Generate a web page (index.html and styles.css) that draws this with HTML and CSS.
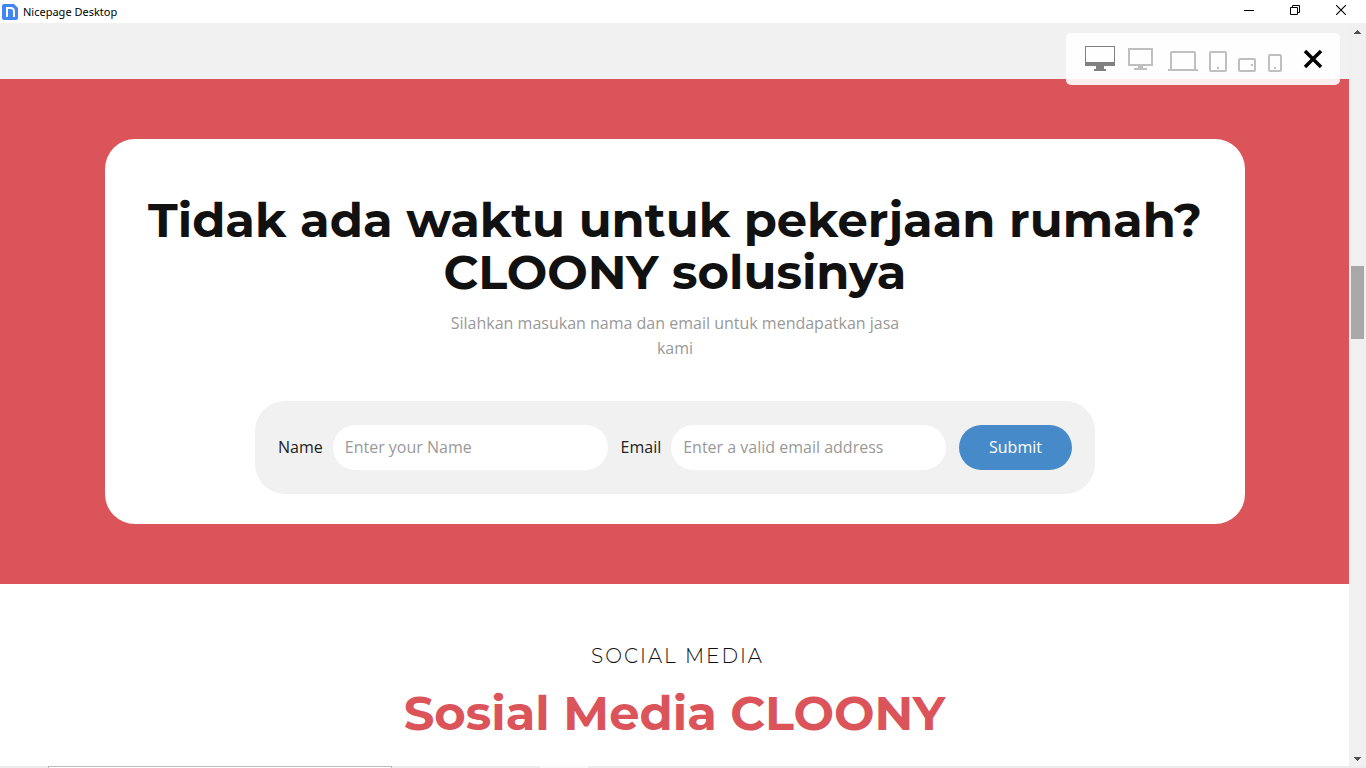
FILE: index.html
```
<!DOCTYPE html>
<html lang="id">
<head>
<meta charset="utf-8">
<title>Nicepage Desktop</title>
<link rel="stylesheet" href="styles.css">
</head>
<body>
<div class="window">
  <header class="titlebar">
    <svg class="app-icon" width="16" height="16" viewBox="0 0 16 16" aria-hidden="true"><path d="M2 0h10l4 4v10a2 2 0 0 1-2 2H2a2 2 0 0 1-2-2V2a2 2 0 0 1 2-2z" fill="#4285f4"/><path d="M5 13V4h3.500q3.500 0 3.500 3.500V13" fill="none" stroke="#fff" stroke-width="2"/></svg>
    <span class="app-name">Nicepage Desktop</span>
    <div class="window-controls">
      <button class="window-button" type="button" aria-label="Minimize"><svg width="10" height="10" viewBox="0 0 10 10"><path d="M0 5.500h10" stroke="#000"/></svg></button>
      <button class="window-button" type="button" aria-label="Restore"><svg width="10" height="10" viewBox="0 0 10 10"><path d="M.5 2.500h7v7h-7zM2.500 2V.5h7v7H8" fill="none" stroke="#000"/></svg></button>
      <button class="window-button" type="button" aria-label="Close"><svg width="10" height="10" viewBox="0 0 10 10"><path d="M0 0l10 10M10 0L0 10" stroke="#000" stroke-width="1.100"/></svg></button>
    </div>
  </header>
  <div class="viewport">
    <main class="page">
      <div class="previous-section"></div>
      <section class="signup">
        <div class="card">
          <h1 class="heading">Tidak ada waktu untuk pekerjaan rumah? CLOONY solusinya</h1>
          <p class="lead">Silahkan masukan nama dan email untuk mendapatkan jasa kami</p>
          <form class="form">
            <label class="label" for="name">Name</label>
            <input class="field" id="name" type="text" placeholder="Enter your Name">
            <label class="label" for="email">Email</label>
            <input class="field" id="email" type="email" placeholder="Enter a valid email address">
            <button class="submit" type="button">Submit</button>
          </form>
        </div>
      </section>
      <section class="social">
        <p class="eyebrow">Social Media</p>
        <h2 class="heading heading-accent">Sosial Media CLOONY</h2>
      </section>
    </main>
    <div class="scrollbar" aria-hidden="true">
      <svg class="arrow" width="7" height="4" viewBox="0 0 7 4" shape-rendering="crispEdges"><path d="M3 0h1v1h1v1h1v1h1v1H0V3h1V2h1V1h1z" fill="#505050"/></svg>
      <div class="track"><div class="thumb"></div></div>
      <svg class="arrow" width="7" height="4" viewBox="0 0 7 4" shape-rendering="crispEdges"><path d="M0 0h7v1H6v1H5v1H4v1H3V3H2V2H1V1H0z" fill="#505050"/></svg>
    </div>
    <div class="devices">
      <svg width="274" height="52" viewBox="0 0 274 52" role="img" aria-label="Preview devices">
        <g fill="#808080"><path d="M19 13h30v20H19zM20 14v15h28V14z" fill-rule="evenodd"/><path d="M30 33h8v3h2v2H28v-2h2z"/></g>
        <g fill="none" stroke="#bfbfbf" stroke-width="2">
          <path d="M63 16h23v16H63z"/><path d="M72 34h5M68 36h13"/>
          <path d="M105 36V20q0-1 1-1h22q1 0 1 1v16M102 37h30"/>
          <rect x="144" y="19" width="16" height="19" rx="1"/><path d="M151 35h2"/>
          <rect x="173" y="26" width="16" height="12" rx="1"/><path d="M185 32h2"/>
          <rect x="203" y="22" width="12" height="16" rx="1"/><path d="M208 35h2"/>
        </g>
        <path d="M239 18l16 16M255 18l-16 16" stroke="#000" stroke-width="3.500"/>
      </svg>
    </div>
  </div>
  <div class="edge"><div class="edge-panel"></div><div class="edge-light"></div></div>
</div>
</body>
</html>
```
FILE: styles.css
```
* { box-sizing: border-box; }

body {
  margin: 0;
  font-family: "Open Sans", sans-serif;
  font-size: 16px;
  color: #111;
  background: #fff;
}

button { border: 0; padding: 0; font: inherit; }

.window {
  display: flex;
  flex-direction: column;
  height: 100vh;
  overflow: hidden;
}

.titlebar {
  display: flex;
  align-items: center;
  flex: none;
  height: 23px;
  padding-left: 2px;
  gap: 5px;
}

.app-name {
  font-family: "Noto Sans", sans-serif;
  font-size: 11px;
  color: #000;
}

.window-controls { display: flex; margin-left: auto; height: 100%; padding: 0 2px 3px 0; }

.window-button {
  display: flex;
  align-items: center;
  justify-content: center;
  width: 46px;
  background: none;
}

.viewport {
  position: relative;
  display: flex;
  flex: 1;
  min-height: 0;
}

.page { flex: 1; min-width: 0; overflow: hidden; }

.previous-section { height: 56px; background: #f1f1f1; }

.signup { padding: 60px 104px 60px 105px; background: #db545a; }

.card {
  padding: 55px 30px 30px;
  border-radius: 30px;
  background: #fff;
  text-align: center;
}

.heading {
  margin: 0;
  font-family: Montserrat, Inter, sans-serif;
  font-size: 48px;
  font-weight: 700;
  line-height: 52px;
}

.lead {
  max-width: 480px;
  margin: 13px auto 40px;
  line-height: 25px;
  color: #999;
}

.form {
  display: flex;
  align-items: center;
  max-width: 840px;
  margin: 0 auto;
  padding: 24px 23px;
  border-radius: 30px;
  background: #f1f1f1;
}

.label { margin-right: 10px; padding-bottom: 2px; color: #222; }

.field {
  flex: 1;
  min-width: 0;
  height: 45px;
  margin-right: 13px;
  padding: 0 12px 2px;
  border: 0;
  border-radius: 23px;
  background: #fff;
  font: inherit;
}
.field::placeholder { color: #999; opacity: 1; }

.submit {
  width: 113px;
  height: 45px;
  padding-bottom: 2px;
  border-radius: 23px;
  background: #478ac9;
  color: #fff;
  font-weight: 500;
}

.social { padding-top: 60px; text-align: center; }

.eyebrow {
  margin: 0 0 19px;
  padding-left: 6px;
  font-family: Montserrat, Inter, sans-serif;
  font-size: 20px;
  font-weight: 300;
  line-height: 24px;
  letter-spacing: 2px;
  text-transform: uppercase;
}

.heading-accent { color: #db545a; }

.scrollbar {
  display: flex;
  flex-direction: column;
  align-items: center;
  width: 17px;
  padding: 7px 0 5px;
  background: #f0f0f0;
}

.arrow { flex: none; }
.track { flex: 1; width: 13px; padding-top: 232px; }
.thumb { height: 73px; background: #a8a8a8; }

.devices {
  position: absolute;
  top: 10px;
  right: 26px;
  height: 52px;
  border-radius: 5px;
  background: rgba(255, 255, 255, 0.9);
}

.edge { display: flex; flex: none; height: 2px; padding-left: 48px; background: #ececec; }
.edge-panel { width: 344px; margin-right: 148px; border: 1px solid #bbb; border-bottom: 0; background: #fff; }
.edge-light { width: 48px; background: #f8f8f8; }
```
